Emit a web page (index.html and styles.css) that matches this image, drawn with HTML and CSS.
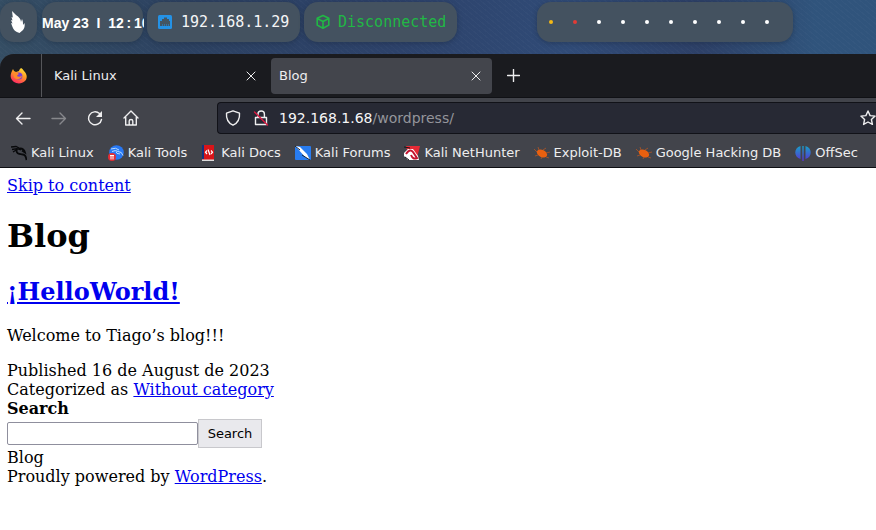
FILE: index.html
```html
<!DOCTYPE html>
<html lang="en">
<head>
<meta charset="utf-8">
<title>Blog</title>
<link rel="stylesheet" href="styles.css">
</head>
<body>
<header class="panel">
  <div class="pill pill-menu">
    <svg width="16" height="22" viewBox="0 0 16 22" fill="#fff"><path d="M2 0l4 4c3 2 5 4 5 7l1-3c1 2 1 4 1 6l1.500-2c.5 3 0 5-1.500 7l-3.500 3c-4-1-6-3-7-6L1 12l1.500.5L1 9l1.500.5L1.500 6l1.300.5z"/></svg>
  </div>
  <div class="pill pill-clock"><span>May 23 &nbsp;I&nbsp; 12&#8201;:&#8201;10</span></div>
  <div class="pill pill-status">
    <svg width="14" height="14" viewBox="0 0 14 14"><rect width="14" height="14" rx="1.500" fill="#2492e6"/><path d="M2 11V6h2V4h2V2.500h3V4h2v2h1v5h-1.500V9H10v2H8.500V9H8v2H6.500V9H6v2H4.500V9H4v2z" fill="#435563"/></svg>
    <span class="mono">192.168.1.29</span>
  </div>
  <div class="pill pill-status pill-vpn">
    <svg width="14" height="16" viewBox="0 0 14 16" fill="none" stroke="#21b845" stroke-width="1.600" stroke-linejoin="round"><path d="M7 1.500l5.800 2.800v6.800L7 14.300l-5.800-3.200V4.300zM1.200 4.500L7 7.500l5.800-3M7 7.500v6.500"/></svg>
    <span class="mono">Disconnected</span>
  </div>
  <div class="pill pill-spaces">
    <i class="dot dot-yellow"></i><i class="dot dot-red"></i><i class="dot"></i><i class="dot"></i><i class="dot"></i><i class="dot"></i><i class="dot"></i><i class="dot"></i><i class="dot"></i><i class="dot"></i>
  </div>
</header>
<div class="window">
  <div class="tabs">
    <div class="brand">
      <svg width="18" height="18" viewBox="0 0 18 18"><defs><linearGradient id="fox" x1=".8" y1="0" x2=".3" y2="1"><stop offset="0" stop-color="#ffe83b"/><stop offset=".45" stop-color="#ff9825"/><stop offset="1" stop-color="#ff2565"/></linearGradient></defs><path d="M11 1c2 1 2 2 3 3 4 4 3 8 1 10-3 3-8 3-11 1C0 12 0 8 2 4l1-2 1 2 2 1 3-1c0-1 1-2 2-3z" fill="url(#fox)"/><circle cx="8.800" cy="9" r="3.600" fill="#7940d5"/><path d="M3 6c2-1 4-1 6 1-1 1-2 1-2 2 1 1 3 1 5 0-1 4-7 4-8 1z" fill="#ff8a2b"/></svg>
    </div>
    <div class="tab"><span>Kali Linux</span><button class="icon-button close" aria-label="Close Kali Linux"><svg width="10" height="10" viewBox="0 0 10 10"><path d="M1 1l8 8M9 1l-8 8"/></svg></button></div>
    <div class="tab tab-active"><span>Blog</span><button class="icon-button close" aria-label="Close Blog"><svg width="10" height="10" viewBox="0 0 10 10"><path d="M1 1l8 8M9 1l-8 8"/></svg></button></div>
    <button class="icon-button new-tab" aria-label="New tab"><svg width="13" height="13" viewBox="0 0 13 13"><path d="M6.500 .5v12M.5 6.500h12"/></svg></button>
  </div>
  <div class="toolbar">
    <nav class="nav">
      <button class="icon-button" aria-label="Back"><svg width="16" height="16" viewBox="0 0 16 16"><path d="M15 8.500H1.500M7 3L1.500 8.500 7 14"/></svg></button>
      <button class="icon-button" aria-label="Forward" disabled><svg width="16" height="16" viewBox="0 0 16 16"><path d="M1 8.500h13.500M9 3L14.500 8.500 9 14"/></svg></button>
      <button class="icon-button" aria-label="Reload"><svg width="16" height="16" viewBox="0 0 16 16"><path d="M12.500 3.500A6.500 6.500 0 1 0 14.500 9.500"/><path d="M15 1v6H9z" class="solid"/></svg></button>
      <button class="icon-button" aria-label="Home"><svg width="16" height="16" viewBox="0 0 16 16"><path d="M1 8l7-7 7 7M2.700 7v8h10.600V7M6.200 15v-4q0-1.500 1.800-1.500t1.800 1.500v4"/></svg></button>
    </nav>
    <div class="address">
      <svg width="16" height="16" viewBox="0 0 16 16"><path d="M8 .8L14.500 3.200c.4 5-1.700 9.800-6.500 12C3.200 13 1.100 8.200 1.500 3.200z"/></svg>
      <svg width="16" height="16" viewBox="0 0 16 16"><path d="M2.500 7.500h11v7h-11zM5 7.500V4q0-3 3.200-3t3.200 3v3.500"/><path d="M1.500 2l13 13" class="slash"/></svg>
      <a class="url" href="#content">192.168.1.68<span>/wordpress/</span></a>
      <button class="icon-button" aria-label="Bookmark this page"><svg width="16" height="16" viewBox="0 0 16 16"><path d="M8 1l2.100 4.600 5 .5-3.700 3.400 1 4.900L8 12l-4.400 2.400 1-4.900L.9 6.100l5-.5z"/></svg></button>
    </div>
  </div>
  <nav class="bookmarks">
    <a href="#kali"><svg width="16" height="16" viewBox="0 0 16 16" fill="none" stroke="#08090b" stroke-width="1.300"><path d="M0 2l5-.5 5 2.500M1 4.500l5-.8L10 5M2 7l4-2.500"/><path d="M6 4C4 9 9 9 12 9.500s3 3 3.500 5.500M9 3.500q4 0 5 4l-3-2" stroke-width="1.800"/></svg>Kali Linux</a>
    <a href="#tools"><svg width="16" height="16" viewBox="0 0 16 16"><circle cx="8.500" cy="7.500" r="7.300" fill="#2778f5"/><path d="M3 4q5-2 8 1M4 6.500q4-2 6 0 4 0 5 4M8 6.500q0 2.500 4 2.500" fill="none" stroke="#b8dcff"/><circle cx="4" cy="12" r="4" fill="#e22d35"/><path d="M2 10.500h4M3 10.500v4M5 10.500v4" stroke="#fff"/></svg>Kali Tools</a>
    <a href="#docs"><svg width="16" height="16" viewBox="-1 0 16 16"><path d="M0 0h12v15H0z" fill="#d91519"/><path d="M0 0h2v14H0z" fill="#15337d"/><path d="M0 14.500h12V16H0z" fill="#ddd"/><path d="M5 5.500L3.500 7.200 5 9M9 5.500l1.500 1.700L9 9M6 4.500l2 5.500" fill="none" stroke="#fff" stroke-width="1.200"/></svg>Kali Docs</a>
    <a href="#forums"><svg width="16" height="16" viewBox="0 0 16 16"><rect y="1" width="16" height="14" rx="1" fill="#287cf0"/><path d="M0 1l5 1 7 7 3 6-5-3-7-8z" fill="#fff"/><path d="M0 1l5 4M7 10l8 5" stroke="#15202d"/></svg>Kali Forums</a>
    <a href="#nethunter"><svg width="16" height="16" viewBox="0 0 16 16"><path d="M2 1h14l-3 12H5z" fill="#e52a36"/><path d="M0 8l4-4h5l5 7 1 4H4l-4-4z" fill="#fff"/><path d="M2 9q4-6 7-2l4 6q-4 2-6-3" fill="none" stroke="#c2132f" stroke-width="2"/><path d="M0 2l6 1M1 12l4 3" stroke="#161719"/></svg>Kali NetHunter</a>
    <a href="#exploit"><svg width="16" height="16" viewBox="0 0 16 16"><ellipse cx="8" cy="8.500" rx="5.500" ry="3.600" transform="rotate(28 8 8.500)" fill="#e8600f"/><path d="M3 7L0 4M5 5L4 2M9 5l3-2M12 8l4-1M4 10l-3 1M8 12l-1 2M12 12l3 1" stroke="#b25525" stroke-width=".8"/></svg>Exploit-DB</a>
    <a href="#ghdb"><svg width="16" height="16" viewBox="0 0 16 16"><ellipse cx="8" cy="8.500" rx="5.500" ry="3.600" transform="rotate(28 8 8.500)" fill="#e8600f"/><path d="M3 7L0 4M5 5L4 2M9 5l3-2M12 8l4-1M4 10l-3 1M8 12l-1 2M12 12l3 1" stroke="#b25525" stroke-width=".8"/></svg>Google Hacking DB</a>
    <a href="#offsec"><svg width="16" height="16" viewBox="0 0 16 16"><defs><linearGradient id="off" gradientUnits="userSpaceOnUse" x1="0" y1="0" x2="0" y2="16"><stop stop-color="#14a6c7"/><stop offset="1" stop-color="#5932d4"/></linearGradient></defs><path d="M5.500 1v13C-1.500 12-1.500 3 5.500 1zM10.500 1v13c7-2 7-11 0-13zM7.300 1h1.400v15H7.300z" fill="url(#off)"/></svg>OffSec</a>
  </nav>
</div>
<main class="page" id="content">
  <a href="#content">Skip to content</a>
  <h1>Blog</h1>
  <h2><a href="#hello">¡HelloWorld!</a></h2>
  <p>Welcome to Tiago’s blog!!!</p>
  <div>Published 16 de August de 2023</div>
  <div>Categorized as <a href="#category">Without category</a></div>
  <form class="search">
    <label for="query">Search</label>
    <div class="search-row"><input id="query" type="search"><button type="button">Search</button></div>
  </form>
  <footer>
    <div>Blog</div>
    <div>Proudly powered by <a href="#wordpress">WordPress</a>.</div>
  </footer>
</main>
</body>
</html>
```

FILE: styles.css
```css
* { box-sizing: border-box; }

body {
  margin: 0;
  overflow-x: hidden;
  background: #fff;
  color: #000;
  font: 16px/19px "DejaVu Serif", serif;
}

svg { display: block; flex: none; }

.panel {
  display: flex;
  gap: 4px;
  padding: 2px 0 26px;
  margin-bottom: -14px;
  background:
    repeating-linear-gradient(40deg, #ffffff05 0 1px, transparent 1px 4px),
    linear-gradient(90deg, #354e64, #2c4161 22%, #2d426a 45%, #304b77 65%, #2d4067 80%, #30547c 93%);
}

.pill {
  display: flex;
  align-items: center;
  flex: none;
  height: 40px;
  border-radius: 14px;
  background: #445260;
  box-shadow: 0 1px 5px #17233566;
}

.pill-menu { width: 37px; padding-left: 10px; }

.pill-clock {
  width: 101px;
  margin-left: 1px;
  color: #fff;
  font: bold 14px/20px "Liberation Sans", sans-serif;
  white-space: nowrap;
  padding-top: 2px;
}

.pill-clock span { flex: none; width: 102px; overflow: hidden; }

.pill-status { gap: 9px; width: 153px; padding-left: 11px; color: #f4f5f6; }
.pill-vpn { gap: 8px; padding-left: 12px; color: #21b845; }
.mono { font: 15px/20px "DejaVu Sans Mono", monospace; }

.pill-spaces {
  gap: 20px;
  width: 256px;
  margin-left: 76px;
  padding-left: 12px;
}

.dot { width: 4px; height: 4px; border-radius: 2px; background: #fff; }
.dot-yellow { background: #f5b915; }
.dot-red { background: #e23b35; }

.window {
  position: relative;
  border-radius: 14px 0 0;
  background: #42444b;
  border-bottom: 1px solid #0e0f13;
  color: #eeeeef;
  font: 13px/18px "DejaVu Sans", sans-serif;
  overflow: hidden;
}

.tabs {
  display: flex;
  height: 44px;
  background: #1a1b1f;
  border-bottom: 1px solid #101115;
}

.brand {
  display: flex;
  align-items: center;
  width: 42px;
  padding-left: 10px;
  border-right: 1px solid #55565a;
}

.tab {
  display: flex;
  align-items: center;
  justify-content: space-between;
  width: 221px;
  height: 36px;
  margin: 4px 0;
  padding: 0 8px;
  border-radius: 4px;
}

.tab:not(.tab-active) { width: 225px; margin-right: 4px; padding-left: 12px; }
.tab-active { background: #43454c; }

.icon-button {
  display: flex;
  align-items: center;
  justify-content: center;
  flex: none;
  padding: 0;
  border: 0;
  background: none;
}

.icon-button svg,
.address svg {
  fill: none;
  stroke: #eeeeef;
  stroke-width: 1.4px;
  stroke-linejoin: round;
  stroke-linecap: round;
}

.icon-button .solid { fill: #eeeeef; stroke: none; }
.icon-button:disabled { opacity: .4; }
.close { width: 16px; height: 16px; }
.icon-button.close svg { stroke-width: 1px; }
.new-tab { width: 43px; }

.toolbar { display: flex; align-items: flex-start; height: 40px; padding-top: 4px; }
.nav { display: flex; gap: 20px; flex: none; width: 217px; height: 32px; padding-left: 15px; }

.address {
  display: flex;
  align-items: center;
  flex: 1;
  gap: 12px;
  height: 32px;
  padding-left: 7px;
  border: 1px solid #111218;
  border-right: 0;
  border-radius: 4px 0 0 4px;
  background: #272934;
}

.address .slash { stroke: #dc1941; }

.url {
  flex: 1;
  margin-left: -2px;
  color: #f6f6f7;
  font-size: 14px;
  text-decoration: none;
}

.url span { color: #94959b; }

.bookmarks {
  display: flex;
  align-items: center;
  gap: 14px;
  height: 29px;
  padding-left: 11px;
  white-space: nowrap;
}

.bookmarks a {
  display: flex;
  align-items: center;
  gap: 4px;
  color: inherit;
  text-decoration: none;
}

.page { padding: 8px 7px; }
.page a { color: #0000ee; }
.page h1 { margin: 22px 0; font-size: 32px; line-height: 38px; }
.page h2 { margin: 22px 0 20px; font-size: 24px; line-height: 29px; }
.page p { margin: 20px 0 16px; }
.search label { display: block; font-weight: bold; line-height: 20px; }
.search-row { display: flex; align-items: center; }

.search input {
  width: 191px;
  height: 23px;
  border: 1px solid #8f8f9d;
  border-radius: 2px;
  background: #fff;
}

.search button {
  width: 64px;
  height: 29px;
  padding: 0;
  border: 1px solid #c8c8cc;
  background: #e9e9ed;
  color: #000;
  font: 13px/18px "DejaVu Sans", sans-serif;
}
```
